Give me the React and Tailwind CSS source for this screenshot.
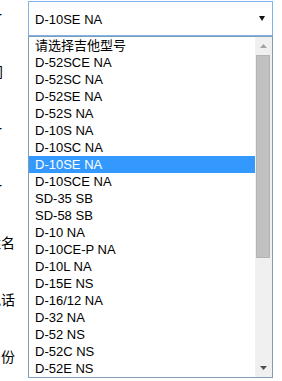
const OPTIONS = [
  '请选择吉他型号',
  'D-52SCE NA',
  'D-52SC NA',
  'D-52SE NA',
  'D-52S NA',
  'D-10S NA',
  'D-10SC NA',
  'D-10SE NA',
  'D-10SCE NA',
  'SD-35 SB',
  'SD-58 SB',
  'D-10 NA',
  'D-10CE-P NA',
  'D-10L NA',
  'D-15E NS',
  'D-16/12 NA',
  'D-32 NA',
  'D-52 NS',
  'D-52C NS',
  'D-52E NS',
];

const SELECTED = 'D-10SE NA';

// labels of the form behind the dropdown, mostly cut off by the left edge
const LABELS = [
  { text: '吉他型一', pad: 'pr-[26px]' },
  { text: '购买时间', pad: 'pr-[25px]' },
  { text: '统一', pad: 'pr-[26px]' },
  { text: '第一', pad: 'pr-[26px]' },
  { text: '姓名', pad: 'pr-[13px]' },
  { text: '电话', pad: 'pr-[13px]' },
  { text: '身份', pad: 'pr-[13px]' },
];

export default function App() {
  return (
    <div
      className="w-[282px] h-[381px] bg-white overflow-hidden flex"
      style={{ fontFamily: '"Liberation Sans", Arial, "Noto Sans CJK SC", sans-serif' }}
    >
      {/* ── Label column ─────────────────────────────────────────── */}
      <div className="w-[28px] shrink-0 overflow-hidden">
        <div className="flex flex-col mt-[-14px]">
          {LABELS.map(({ text, pad }) => (
            <div
              key={text}
              className={`h-[57px] flex items-center justify-end whitespace-nowrap text-[14px] text-black ${pad}`}
              style={{ fontFamily: '"Noto Sans CJK SC", sans-serif' }}
            >
              {text}
            </div>
          ))}
        </div>
      </div>

      {/* ── Select + open list ───────────────────────────────────── */}
      <div className="w-[245px] shrink-0 mt-[1px] flex flex-col">
        <div className="h-[35px] border border-[#7eb4ea] bg-white flex items-center pl-[6px] pr-[7px] pt-[2px] text-[13px] text-black">
          <span className="flex-1">{SELECTED}</span>
          <svg width="6" height="5" viewBox="0 0 6 5" className="mb-[2px]">
            <path d="M0 0h6L3 5z" fill="#111" />
          </svg>
        </div>

        <div className="border border-[#7f9db9] flex bg-white">
          <div className="flex-1 flex flex-col">
            {OPTIONS.map((opt) => {
              const active = opt === SELECTED;
              return (
                <div
                  key={opt}
                  className={`h-[17px] leading-[17px] pl-[6px] text-[13px] whitespace-nowrap ${
                    active ? 'bg-[#3399ff] text-white' : 'text-black'
                  }`}
                >
                  {opt}
                </div>
              );
            })}
          </div>

          {/* scrollbar */}
          <div className="w-[17px] bg-[#f0f0f0] flex flex-col">
            <div className="h-[18px] flex items-center justify-center">
              <svg width="7" height="4" viewBox="0 0 7 4">
                <path d="M0 4h7L3.5 0z" fill="#a3a3a3" />
              </svg>
            </div>
            <div className="h-[203px] w-[14px] ml-[1px] bg-[#c1c1c1] border border-[#b4b4b4]" />
            <div className="flex-1" />
            <div className="h-[17px] flex items-center justify-center pb-[1px]">
              <svg width="7" height="4" viewBox="0 0 7 4">
                <path d="M0 0h7L3.5 4z" fill="#505050" />
              </svg>
            </div>
          </div>
        </div>
      </div>
    </div>
  );
}
